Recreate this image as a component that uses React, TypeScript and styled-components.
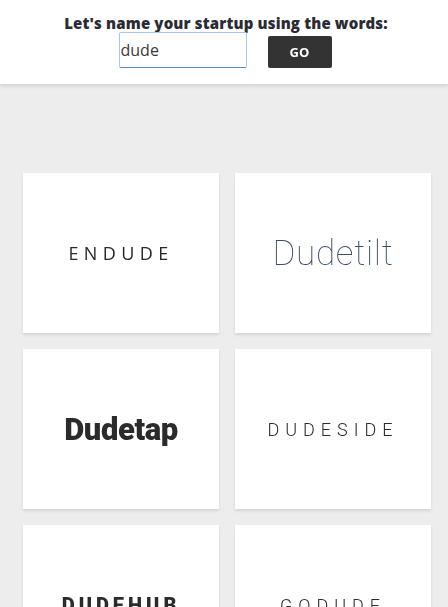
import React, { useState } from 'react';
import styled, { createGlobalStyle, css } from 'styled-components';

const GlobalStyle = createGlobalStyle`
  html, body {
    margin: 0;
    padding: 0;
    overflow: hidden;
    background: #ededed;
    font-family: "Open Sans", "Liberation Sans", sans-serif;
  }
`;

const Page = styled.div`
  min-height: 100vh;
  background: #ededed;
`;

const Header = styled.header`
  background: #ffffff;
  display: flex;
  flex-direction: column;
  align-items: center;
  padding: 14px 0 16px;
  box-shadow: 0 2px 4px rgba(0, 0, 0, 0.12);
`;

const Title = styled.h1`
  margin: 0 0 0 4px;
  font-size: 15px;
  line-height: 18px;
  font-weight: 800;
  letter-spacing: 0.15px;
  color: #2b2b35;
`;

const SearchRow = styled.div`
  display: flex;
  align-items: flex-end;
  gap: 21px;
  margin-left: 2px;
`;

const WordInput = styled.input`
  box-sizing: border-box;
  width: 128px;
  height: 36px;
  padding: 0 1px;
  font-family: "Open Sans", "Liberation Sans", sans-serif;
  font-size: 16px;
  color: #3a3a3a;
  border: 1px solid #a8c4f4;
  border-bottom-color: #5a84d4;
  border-radius: 2px;
  background: #fff;
  caret-color: #222;

  &:focus {
    outline: none;
  }
`;

const GoButton = styled.button`
  width: 64px;
  height: 32px;
  border: none;
  border-radius: 2px;
  background: #333333;
  color: #ffffff;
  font-family: "Open Sans", "Liberation Sans", sans-serif;
  font-size: 13px;
  font-weight: 700;
  cursor: pointer;
`;

const Grid = styled.main`
  display: grid;
  grid-template-columns: repeat(2, 196px);
  grid-auto-rows: 160px;
  gap: 16px;
  padding: 89px 17px 24px 23px;
`;

const Card = styled.div`
  background: #ffffff;
  display: flex;
  align-items: center;
  justify-content: center;
  box-shadow: 0 2px 3px rgba(0, 0, 0, 0.1);
`;

type Kind = 'spaced' | 'thin' | 'heavy' | 'heavyCaps' | 'wide';

const kindStyles: Record<Kind, ReturnType<typeof css>> = {
  spaced: css`
    font-family: "Open Sans", sans-serif;
    font-size: 18px;
    font-weight: 400;
    letter-spacing: 5.4px;
    text-transform: uppercase;
    color: #262630;
  `,
  thin: css`
    font-family: Roboto, Lato, sans-serif;
    font-size: 35px;
    font-weight: 100;
    letter-spacing: 0.7px;
    color: #3c4a66;
  `,
  heavy: css`
    font-family: Roboto, "Liberation Sans", sans-serif;
    font-size: 31px;
    font-weight: 900;
    letter-spacing: -0.4px;
    color: #2b2b2b;
  `,
  heavyCaps: css`
    font-family: Roboto, "Liberation Sans", sans-serif;
    font-size: 20px;
    font-weight: 900;
    letter-spacing: 4px;
    text-transform: uppercase;
    color: #2b2b2b;
  `,
  wide: css`
    font-family: Roboto, "Open Sans", sans-serif;
    font-size: 18px;
    font-weight: 300;
    letter-spacing: 6px;
    text-transform: uppercase;
    color: #2b2b35;
  `,
};

const BrandName = styled.span<{ $kind: Kind }>`
  white-space: nowrap;
  ${(p) => kindStyles[p.$kind]}
`;

interface Brand {
  name: string;
  kind: Kind;
}

const brands: Brand[] = [
  { name: 'Endude', kind: 'spaced' },
  { name: 'Dudetilt', kind: 'thin' },
  { name: 'Dudetap', kind: 'heavy' },
  { name: 'Dudeside', kind: 'wide' },
  { name: 'Dudehub', kind: 'heavyCaps' },
  { name: 'Godude', kind: 'wide' },
];

const App: React.FC = () => {
  const [word, setWord] = useState('dude');

  return (
    <Page>
      <GlobalStyle />
      <Header>
        <Title>Let's name your startup using the words:</Title>
        <SearchRow>
          <WordInput
            autoFocus
            value={word}
            onChange={(e) => setWord(e.target.value)}
          />
          <GoButton>GO</GoButton>
        </SearchRow>
      </Header>

      <Grid>
        {brands.map((b) => (
          <Card key={b.name}>
            <BrandName $kind={b.kind}>{b.name}</BrandName>
          </Card>
        ))}
      </Grid>
    </Page>
  );
};

export default App;
